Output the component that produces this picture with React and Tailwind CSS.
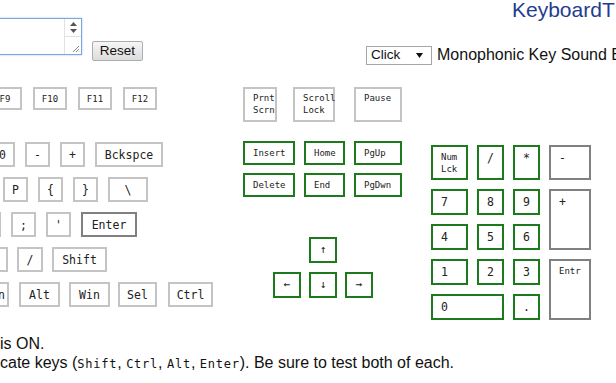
import React from "react";

const MONO = "font-['DejaVu_Sans_Mono',monospace]";

function K({ c = "g", className = "", children }) {
  const border =
    c === "g"
      ? "border-[#c4c4c4]"
      : c === "d"
      ? "border-[#808080]"
      : "border-[#1c7a1c]";
  return (
    <div
      className={`shrink-0 border-2 ${border} bg-white text-[#222] ${MONO} flex ${className}`}
    >
      {children}
    </div>
  );
}

const M = "h-[25px] items-center justify-center text-[11.5px] leading-[14px]";
const F = "h-[23px] w-[34px] items-center justify-center text-[9px] leading-[12px]";
const NAV1 = "h-[35px] flex-col items-start justify-start pt-[3px] pl-[8px] text-[9px] leading-[12px]";
const NAV2 = "h-[24px] items-center justify-start pl-[8px] text-[9px] leading-[12px]";
const ARW = "h-[26px] w-[28px] items-center justify-center text-[11px] leading-[12px]";
const NP = "items-start justify-start pt-[4px] pl-[8px] text-[11.5px] leading-[14px]";
const NPS = "flex-col items-start justify-start pt-[4px] pl-[8px] text-[9px] leading-[12px]";
const CODE = `${MONO} text-[12px] tracking-[0.75px]`;

export default function App() {
  return (
    <div className="w-[616px] h-[383px] overflow-hidden bg-white flex flex-col font-['Liberation_Sans',Arial,sans-serif] text-[#222]">
      {/* header */}
      <div className="h-[87px] flex items-start shrink-0">
        {/* textarea */}
        <div className="ml-[-2px] mt-[18px] w-[84px] h-[37px] border border-[#7ba7dc] shadow-[0_0_2px_#a9c9f0] bg-white flex justify-end shrink-0">
          <div className="w-[17px] h-full border-l border-[#e2e2e2] flex flex-col">
            <div className="h-[18px] border-b border-[#e2e2e2] flex flex-col items-center justify-center gap-[3px]">
              <svg width="7" height="4" viewBox="0 0 7 4">
                <path d="M0 4 L3.5 0 L7 4 Z" fill="#555" />
              </svg>
              <svg width="7" height="4" viewBox="0 0 7 4">
                <path d="M0 0 L3.5 4 L7 0 Z" fill="#555" />
              </svg>
            </div>
            <div className="flex-1 flex items-end justify-end pr-[1px] pb-[1px]">
              <svg width="8" height="8" viewBox="0 0 8 8">
                <path d="M7 1 L1 7 M7 4 L4 7 M7 6.5 L6.5 7" stroke="#888" strokeWidth="1" />
              </svg>
            </div>
          </div>
        </div>
        {/* reset */}
        <div className="ml-[10px] mt-[41px] w-[51px] h-[20px] shrink-0 border border-[#adadad] rounded-[2px] bg-gradient-to-b from-[#f6f6f6] to-[#dcdcdc] flex items-center justify-center text-[13.5px] text-[#111]">
          Reset
        </div>
        {/* right */}
        <div className="ml-[223px] flex flex-col shrink-0">
          <div className="pl-[146px] mt-[-2px] h-[24px] text-[21px] leading-[24px] text-[#1f3d8f] whitespace-nowrap">
            KeyboardT
          </div>
          <div className="mt-[21px] flex items-center whitespace-nowrap">
            <div className="w-[66px] h-[19px] border border-[#a6a6a6] bg-white flex items-center justify-between pl-[4px] pr-[8px] text-[13.5px] text-[#111]">
              <span>Click</span>
              <svg width="7" height="5" viewBox="0 0 7 5">
                <path d="M0 0 L7 0 L3.5 5 Z" fill="#111" />
              </svg>
            </div>
            <span className="ml-[5px] text-[16px] text-[#111]">Monophonic Key Sound B</span>
          </div>
        </div>
      </div>

      {/* keyboard area */}
      <div className="flex items-start shrink-0">
        {/* main block */}
        <div className="w-[243px] shrink-0 flex flex-col">
          <div className="flex gap-[11px]">
            <K className={`${F} ml-[-12px]`}>F9</K>
            <K className={F}>F10</K>
            <K className={F}>F11</K>
            <K className={F}>F12</K>
          </div>
          <div className="mt-[32px] flex gap-[10px]">
            <K className={`${M} w-[25px] ml-[-10px]`}>0</K>
            <K className={`${M} w-[25px]`}>-</K>
            <K className={`${M} w-[25px]`}>+</K>
            <K className={`${M} w-[68px]`}>Bckspce</K>
          </div>
          <div className="mt-[10px] flex gap-[10px]">
            <K className={`${M} w-[25px] ml-[3px]`}>P</K>
            <K className={`${M} w-[25px]`}>{"{"}</K>
            <K className={`${M} w-[25px]`}>{"}"}</K>
            <K className={`${M} w-[40px]`}>\</K>
          </div>
          <div className="mt-[10px] flex gap-[10px]">
            <K className={`${M} w-[25px] ml-[-24px]`} />
            <K className={`${M} w-[25px]`}>;</K>
            <K className={`${M} w-[25px]`}>'</K>
            <K c="d" className={`${M} w-[56px]`}>Enter</K>
          </div>
          <div className="mt-[10px] flex gap-[9px]">
            <K className={`${M} w-[38px] ml-[-30px]`} />
            <K className={`${M} w-[26px]`}>/</K>
            <K className={`${M} w-[55px]`}>Shift</K>
          </div>
          <div className="mt-[10px] flex">
            <K className="h-[25px] w-[60px] ml-[-51px] items-center justify-end pr-[2px] text-[11.5px] leading-[14px]">n</K>
            <K className={`${M} w-[41px] ml-[10px]`}>Alt</K>
            <K className={`${M} w-[41px] ml-[9px]`}>Win</K>
            <K className={`${M} w-[39px] ml-[8px]`}>Sel</K>
            <K className={`${M} w-[45px] ml-[11px]`}>Ctrl</K>
          </div>
        </div>

        {/* nav block */}
        <div className="w-[189px] shrink-0 flex flex-col">
          <div className="flex">
            <K className={`${NAV1} w-[34px]`}>
              <span>Prnt</span>
              <span>Scrn</span>
            </K>
            <K className={`${NAV1} w-[42px] ml-[16px]`}>
              <span>Scroll</span>
              <span>Lock</span>
            </K>
            <K className={`${NAV1} w-[48px] ml-[19px]`}>
              <span>Pause</span>
            </K>
          </div>
          <div className="mt-[19px] flex gap-[9px]">
            <K c="G" className={`${NAV2} w-[52px]`}>Insert</K>
            <K c="G" className={`${NAV2} w-[41px]`}>Home</K>
            <K c="G" className={`${NAV2} w-[48px]`}>PgUp</K>
          </div>
          <div className="mt-[8px] flex gap-[9px]">
            <K c="G" className={`${NAV2} w-[52px]`}>Delete</K>
            <K c="G" className={`${NAV2} w-[41px]`}>End</K>
            <K c="G" className={`${NAV2} w-[48px]`}>PgDwn</K>
          </div>
          <div className="mt-[40px] flex">
            <K c="G" className={`${ARW} ml-[66px]`}>↑</K>
          </div>
          <div className="mt-[9px] flex gap-[8px] ml-[30px]">
            <K c="G" className={ARW}>←</K>
            <K c="G" className={ARW}>↓</K>
            <K c="G" className={ARW}>→</K>
          </div>
        </div>

        {/* numpad */}
        <div className="mt-[58px] shrink-0 grid grid-cols-[37px_27px_27px_42px] grid-rows-[35px_26px_26px_26px_26px] gap-y-[9px] gap-x-[9px] ml-[-1px]">
          <K c="G" className={NPS}>
            <span>Num</span>
            <span>Lck</span>
          </K>
          <K c="G" className={NP}>/</K>
          <K c="G" className={NP}>*</K>
          <K c="d" className={NP}>-</K>

          <K c="G" className={NP}>7</K>
          <K c="G" className={NP}>8</K>
          <K c="G" className={NP}>9</K>
          <K c="d" className={`${NP} row-span-2`}>+</K>

          <K c="G" className={NP}>4</K>
          <K c="G" className={NP}>5</K>
          <K c="G" className={NP}>6</K>

          <K c="G" className={NP}>1</K>
          <K c="G" className={NP}>2</K>
          <K c="G" className={NP}>3</K>
          <K c="d" className={`${NPS} row-span-2`}>
            <span>Entr</span>
          </K>

          <K c="G" className={`${NP} col-span-2`}>0</K>
          <K c="G" className={NP}>.</K>
        </div>
      </div>

      {/* bottom text */}
      <div className="mt-[14px] text-[16px] leading-[19px] text-[#111] whitespace-nowrap">
        <div>is ON.</div>
        <div>
          cate keys (<span className={CODE}>Shift</span>,{" "}
          <span className={CODE}>Ctrl</span>,{" "}
          <span className={CODE}>Alt</span>,{" "}
          <span className={CODE}>Enter</span>). Be sure to test both of each.
        </div>
      </div>
    </div>
  );
}
